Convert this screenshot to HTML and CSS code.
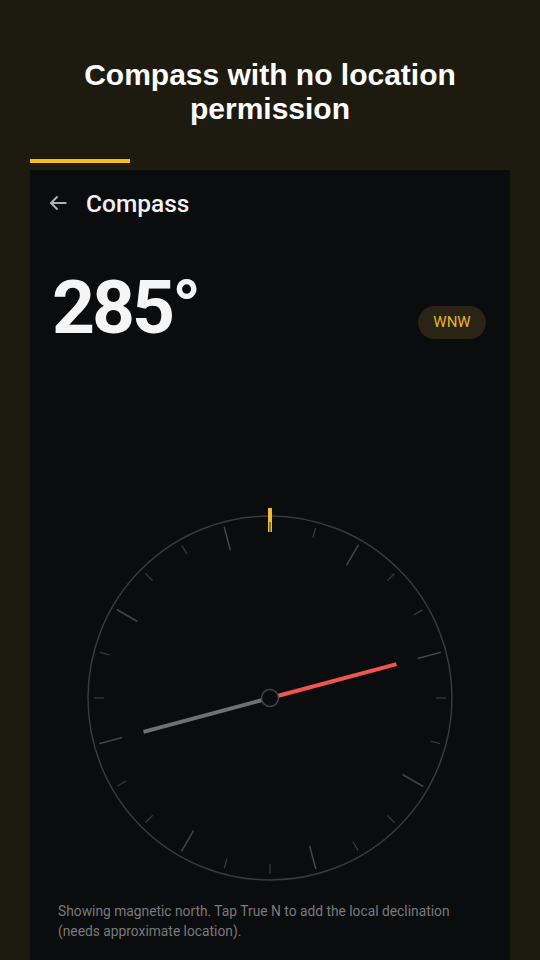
FILE: index.html
```html
<!DOCTYPE html>
<html lang="en">
<head>
    <meta charset="UTF-8">
    <title>Compass</title>
    <link rel="stylesheet" href="styles.css">
</head>
<body>
<h1 class="caption">Compass with no location permission</h1>
<div class="tab-bar"></div>

<div class="screen">
    <div class="top-bar">
        <svg class="back" width="20" height="20" viewBox="0 0 20 20">
            <path d="M18.5 10H3M9.5 3.5L3 10l6.5 6.5" fill="none" stroke="#b0b0b0" stroke-width="2"/>
        </svg>
        <span class="top-title">Compass</span>
    </div>

    <div class="reading">
        <span class="degrees">285°</span>
        <span class="point">WNW</span>
    </div>

    <svg class="dial" width="400" height="400" viewBox="0 0 400 400">
        <circle cx="200" cy="200" r="182" fill="none" stroke="#3a3a3c" stroke-width="1.5"/>
        <!-- marker -->
        <rect x="198" y="10" width="4" height="24" fill="#f5bd1f"/>
        <!-- long ticks -->
        <g stroke="#444548" stroke-width="1.5">
            <line x1="200" y1="23" x2="200" y2="47" transform="rotate(30 200 200)"/>
            <line x1="200" y1="23" x2="200" y2="47" transform="rotate(75 200 200)"/>
            <line x1="200" y1="23" x2="200" y2="47" transform="rotate(120 200 200)"/>
            <line x1="200" y1="23" x2="200" y2="47" transform="rotate(165 200 200)"/>
            <line x1="200" y1="23" x2="200" y2="47" transform="rotate(210 200 200)"/>
            <line x1="200" y1="23" x2="200" y2="47" transform="rotate(255 200 200)"/>
            <line x1="200" y1="23" x2="200" y2="47" transform="rotate(300 200 200)"/>
            <line x1="200" y1="23" x2="200" y2="47" transform="rotate(345 200 200)"/>
        </g>
        <!-- short ticks -->
        <g stroke="#3c3d40" stroke-width="1.2">
            <line x1="200" y1="24" x2="200" y2="34"/>
            <line x1="200" y1="24" x2="200" y2="34" transform="rotate(15 200 200)"/>
            <line x1="200" y1="24" x2="200" y2="34" transform="rotate(45 200 200)"/>
            <line x1="200" y1="24" x2="200" y2="34" transform="rotate(60 200 200)"/>
            <line x1="200" y1="24" x2="200" y2="34" transform="rotate(90 200 200)"/>
            <line x1="200" y1="24" x2="200" y2="34" transform="rotate(105 200 200)"/>
            <line x1="200" y1="24" x2="200" y2="34" transform="rotate(135 200 200)"/>
            <line x1="200" y1="24" x2="200" y2="34" transform="rotate(150 200 200)"/>
            <line x1="200" y1="24" x2="200" y2="34" transform="rotate(180 200 200)"/>
            <line x1="200" y1="24" x2="200" y2="34" transform="rotate(195 200 200)"/>
            <line x1="200" y1="24" x2="200" y2="34" transform="rotate(225 200 200)"/>
            <line x1="200" y1="24" x2="200" y2="34" transform="rotate(240 200 200)"/>
            <line x1="200" y1="24" x2="200" y2="34" transform="rotate(270 200 200)"/>
            <line x1="200" y1="24" x2="200" y2="34" transform="rotate(285 200 200)"/>
            <line x1="200" y1="24" x2="200" y2="34" transform="rotate(315 200 200)"/>
            <line x1="200" y1="24" x2="200" y2="34" transform="rotate(330 200 200)"/>
        </g>
        <!-- needle -->
        <line x1="200" y1="200" x2="326.5" y2="166.1" stroke="#f0554f" stroke-width="4"/>
        <line x1="200" y1="200" x2="73.5" y2="233.9" stroke="#707070" stroke-width="4"/>
        <circle cx="200" cy="200" r="8.5" fill="#0b0c0e" stroke="#444548" stroke-width="1.5"/>
    </svg>

    <p class="note">Showing magnetic north. Tap True N to add the local declination (needs approximate location).</p>
</div>
</body>
</html>
```

FILE: styles.css
```css
*{
    padding:0;
    margin:0;
    box-sizing:border-box;
}

body{
    width:540px;
    height:960px;
    overflow:hidden;
    background-color:#1d1a10;
    font-family:Roboto, "Liberation Sans", sans-serif;
}

.caption{
    padding:58px 30px 0;
    font-family:"Liberation Sans", Arial, sans-serif;
    font-size:30px;
    line-height:34px;
    font-weight:bold;
    color:#fff;
    text-align:center;
}

.tab-bar{
    width:100px;
    height:4px;
    margin:33px 0 0 30px;
    background-color:#f5bd1f;
}

.screen{
    height:790px;
    margin:7px 30px 0;
    background-color:#0b0c0e;
}

.top-bar{
    height:66px;
    padding-left:18px;
    display:flex;
    align-items:center;
    gap:18px;
}

.back{
    display:block;
}

.top-title{
    font-size:24.5px;
    font-weight:500;
    color:#f2f2f2;
}

.reading{
    margin-top:33px;
    padding:0 24px 0 22px;
    display:flex;
    justify-content:space-between;
    align-items:flex-end;
}

.degrees{
    font-size:75px;
    line-height:76px;
    font-weight:bold;
    letter-spacing:-3px;
    color:#f5f5f5;
}

.point{
    margin-bottom:6px;
    width:68px;
    height:33px;
    border-radius:17px;
    background-color:#2a2416;
    color:#eab327;
    font-size:15px;
    line-height:33px;
    text-align:center;
}

.dial{
    display:block;
    margin:153px auto 0;
}

.note{
    margin-top:3px;
    padding:0 24px 0 28px;
    font-size:13.8px;
    line-height:20px;
    color:#7a7a7c;
}
```
